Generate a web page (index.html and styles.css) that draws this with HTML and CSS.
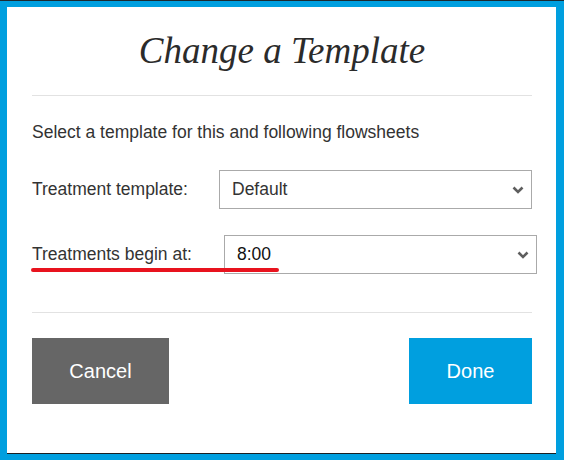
FILE: index.html
```html
<!DOCTYPE html>
<html lang="en">
<head>
<meta charset="utf-8">
<title>Change a Template</title>
<link rel="stylesheet" href="styles.css">
</head>
<body>
<div class="frame">
  <div class="dialog">
    <h1 class="title">Change a Template</h1>
    <hr class="divider">
    <p class="intro">Select a template for this and following flowsheets</p>
    <div class="form-row row-template">
      <span class="label">Treatment template:</span>
      <div class="select select-template">
        <span class="select-value">Default</span>
        <svg class="chevron" width="12" height="8" viewBox="0 0 12 8"><polyline points="1.5,1.5 6,6 10.5,1.5" fill="none" stroke="#5e5e5e" stroke-width="2.6"/></svg>
      </div>
    </div>
    <div class="form-row row-begin">
      <span class="label">Treatments begin at:</span>
      <div class="select select-begin">
        <span class="select-value value-time">8:00</span>
        <svg class="chevron" width="12" height="8" viewBox="0 0 12 8"><polyline points="1.5,1.5 6,6 10.5,1.5" fill="none" stroke="#5e5e5e" stroke-width="2.6"/></svg>
      </div>
      <span class="highlight"></span>
    </div>
    <hr class="divider divider-bottom">
    <div class="actions">
      <button class="btn btn-cancel">Cancel</button>
      <button class="btn btn-done">Done</button>
    </div>
  </div>
</div>
</body>
</html>
```
FILE: styles.css
```css
html, body {
  margin: 0;
  padding: 0;
}
body {
  background: #009fdf;
  font-family: "Liberation Sans", Arial, sans-serif;
  color: #333;
}
.frame {
  box-sizing: border-box;
  width: 564px;
  height: 460px;
  border-top: 1px solid #1d2a30;
  padding: 6px 8px 0 7px;
  background: #009fdf;
}
.dialog {
  box-sizing: border-box;
  height: 447px;
  background: #fff;
  border-bottom: 1px solid #1a1f22;
  padding: 0 24px 0 25px;
}
.title {
  margin: 0;
  padding-top: 24px;
  height: 61px;
  box-sizing: border-box;
  font-family: "Liberation Serif", Georgia, serif;
  font-style: italic;
  font-weight: normal;
  font-size: 37px;
  line-height: 40px;
  text-align: center;
  color: #2b2b2b;
}
.divider {
  margin: 27px 0 0;
  border: 0;
  height: 1px;
  background: #e2e2e2;
}
.intro {
  margin: 26px 0 0;
  font-size: 17.5px;
  line-height: 20px;
}
.form-row {
  position: relative;
  display: flex;
  align-items: center;
  font-size: 17.5px;
}
.row-template {
  margin-top: 28px;
}
.row-begin {
  margin-top: 26px;
}
.label {
  flex: 0 0 187px;
}
.row-begin .label {
  flex-basis: 192px;
}
.select {
  box-sizing: border-box;
  flex: 0 0 313px;
  height: 39px;
  border: 1px solid #aaa;
  display: flex;
  align-items: center;
  justify-content: space-between;
  padding: 0 7px 0 12px;
  background: #fff;
}
.select-begin {
  padding-left: 12px;
}
.select-value {
  font-size: 17.5px;
  color: #333;
}
.value-time {
  color: #111;
}
.chevron {
  display: block;
}
.highlight {
  position: absolute;
  left: -1px;
  top: 33px;
  width: 248px;
  height: 4px;
  border-radius: 2px;
  background: #e8131e;
}
.divider-bottom {
  margin-top: 38px;
}
.actions {
  display: flex;
  justify-content: space-between;
  margin-top: 25px;
}
.btn {
  border: 0;
  height: 66px;
  font-family: "Liberation Sans", Arial, sans-serif;
  font-size: 20px;
  color: #fff;
  padding: 0;
}
.btn-cancel {
  width: 137px;
  background: #666;
}
.btn-done {
  width: 123px;
  background: #009fdf;
}
```
